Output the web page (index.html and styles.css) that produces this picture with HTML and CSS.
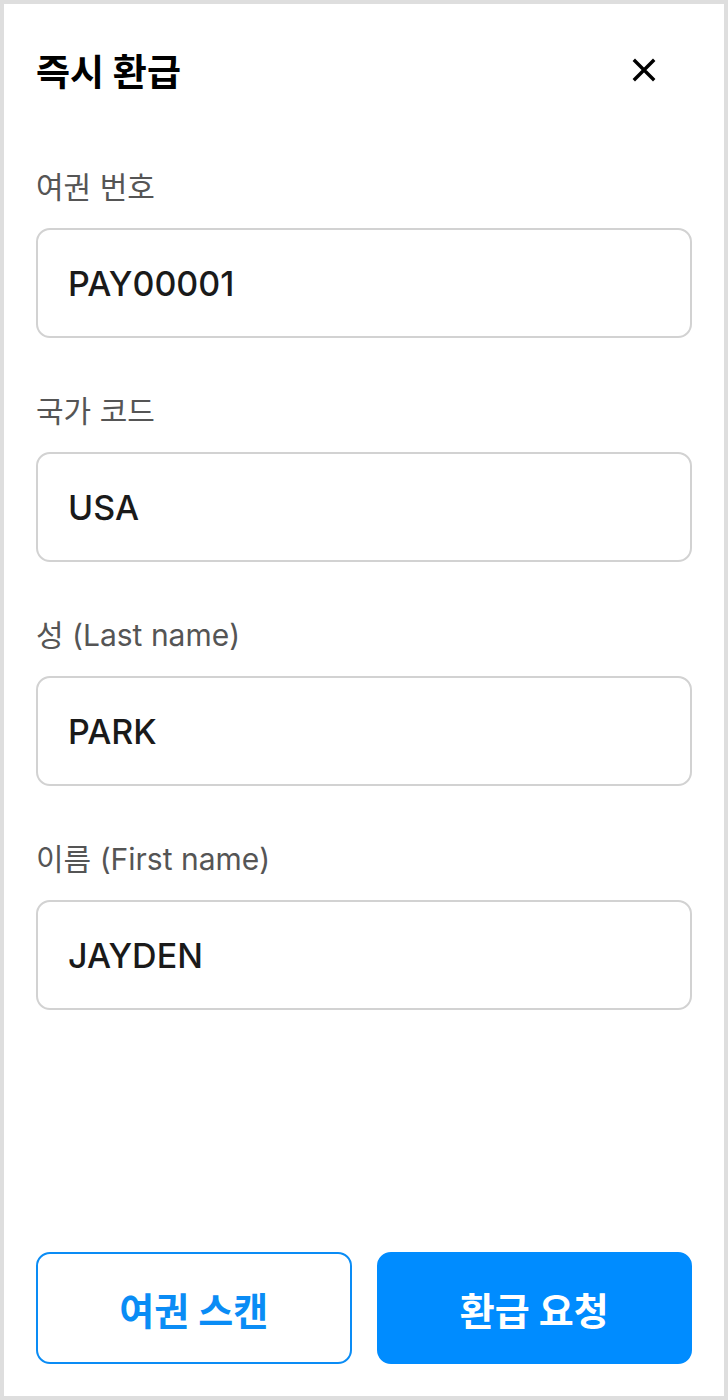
FILE: index.html
```html
<!DOCTYPE html>
<html lang="ko">

<head>
    <meta charset="UTF-8">
    <meta name="viewport" content="width=device-width, initial-scale=1.0">
    <title>즉시 환급</title>
    <link rel="stylesheet" href="styles.css">
</head>

<body>
    <div class="sheet">
        <div class="sheet-header">
            <h1>즉시 환급</h1>
            <button class="close" aria-label="닫기">
                <svg width="24" height="24" viewBox="0 0 24 24">
                    <path d="M3 3 L21 21 M21 3 L3 21" stroke="#000" stroke-width="3.4" stroke-linecap="square" fill="none" />
                </svg>
            </button>
        </div>

        <!-- Passport info -->
        <div class="form">
            <div class="form-group">
                <label for="passportNo">여권 번호</label>
                <input type="text" id="passportNo" value="PAY00001">
            </div>

            <div class="form-group">
                <label for="countryCode">국가 코드</label>
                <input type="text" id="countryCode" value="USA">
            </div>

            <div class="form-group">
                <label for="lastName">성 (Last name)</label>
                <input type="text" id="lastName" value="PARK">
            </div>

            <div class="form-group">
                <label for="firstName">이름 (First name)</label>
                <input type="text" id="firstName" value="JAYDEN">
            </div>
        </div>

        <div class="actions">
            <button class="btn btn-outline">여권 스캔</button>
            <button class="btn btn-primary">환급 요청</button>
        </div>
    </div>
</body>

</html>
```

FILE: styles.css
```css
* {
    box-sizing: border-box;
}

body {
    font-family: "Inter", "Noto Sans CJK KR", sans-serif;
    background-color: #fff;
    margin: 0;
}

.sheet {
    display: flex;
    flex-direction: column;
    height: 1400px;
    border: 4px solid #dedede;
    background: #fff;
}

.sheet-header {
    display: flex;
    align-items: center;
    justify-content: space-between;
    height: 132px;
    padding: 0 32px;
}

.sheet-header h1 {
    margin: 0;
    font-size: 37px;
    font-weight: 700;
    color: #000;
}

.close {
    display: flex;
    align-items: center;
    justify-content: center;
    width: 48px;
    height: 48px;
    margin-right: 24px;
    padding: 0;
    border: none;
    background: none;
    cursor: pointer;
}

.form {
    display: flex;
    flex-direction: column;
    gap: 55px;
    padding: 33px 32px 0;
}

.form-group label {
    display: block;
    margin-bottom: 23px;
    font-size: 30px;
    line-height: 36px;
    color: #555;
}

.form-group input[type="text"] {
    display: block;
    width: 100%;
    height: 110px;
    padding: 0 30px;
    border: 2px solid #d2d2d2;
    border-radius: 14px;
    font-family: inherit;
    font-size: 34px;
    font-weight: 500;
    color: #1a1a1a;
    outline: none;
}

.actions {
    display: flex;
    gap: 25px;
    margin-top: auto;
    padding: 0 32px 32px;
}

.btn {
    flex: 1;
    height: 112px;
    padding: 0;
    border-radius: 14px;
    border: 2px solid #0a8cf5;
    font-family: inherit;
    font-size: 38px;
    font-weight: 700;
    cursor: pointer;
}

.btn-outline {
    background: #fff;
    color: #0a8cf5;
}

.btn-primary {
    background: #008cff;
    border-color: #008cff;
    color: #fff;
}
```
